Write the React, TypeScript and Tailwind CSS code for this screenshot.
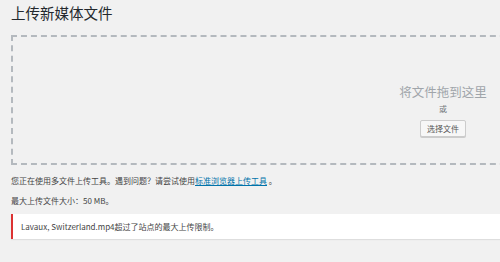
export default function App() {
  return (
    <div className="w-[500px] h-[262px] overflow-hidden bg-[#f1f1f1] font-['Noto_Sans_CJK_SC','Noto_Sans',sans-serif] text-[#444]">
      <div className="pl-[11px] pt-[3px]">
        <h1 className="text-[14.5px] leading-[20px] text-[#23282d] font-normal">上传新媒体文件</h1>
        <div className="mt-[12px] w-[864px] h-[130px] border-2 border-dashed border-[#b4b9be] flex flex-col items-center pt-[48px]">
          <div className="text-[12.5px] leading-[14px] text-[#a0a5aa]">将文件拖到这里</div>
          <div className="mt-[5px] text-[8px] leading-[10px] text-[#72777c]">或</div>
          <button className="mt-[6px] w-[46px] h-[17px] bg-[#f7f7f7] border border-[#cccccc] rounded-[2px] shadow-[0_1px_0_#cccccc] text-[8px] leading-[15px] text-[#555]">
            选择文件
          </button>
        </div>
        <p className="mt-[10px] text-[8px] leading-[12px]">
          您正在使用多文件上传工具。遇到问题？请尝试使用
          <a className="text-[#0073aa] underline">标准浏览器上传工具</a>
          &nbsp;。
        </p>
        <p className="mt-[8px] text-[8px] leading-[12px]">最大上传文件大小：50 MB。</p>
        <div className="mt-[7px] w-[600px] h-[25px] bg-white border-l-[2.5px] border-[#dc3232] shadow-[0_1px_1px_rgba(0,0,0,0.08)] flex items-center pl-[8px]">
          <span className="text-[8px] leading-[12px] text-[#444]">Lavaux, Switzerland.mp4超过了站点的最大上传限制。</span>
        </div>
      </div>
    </div>
  );
}
